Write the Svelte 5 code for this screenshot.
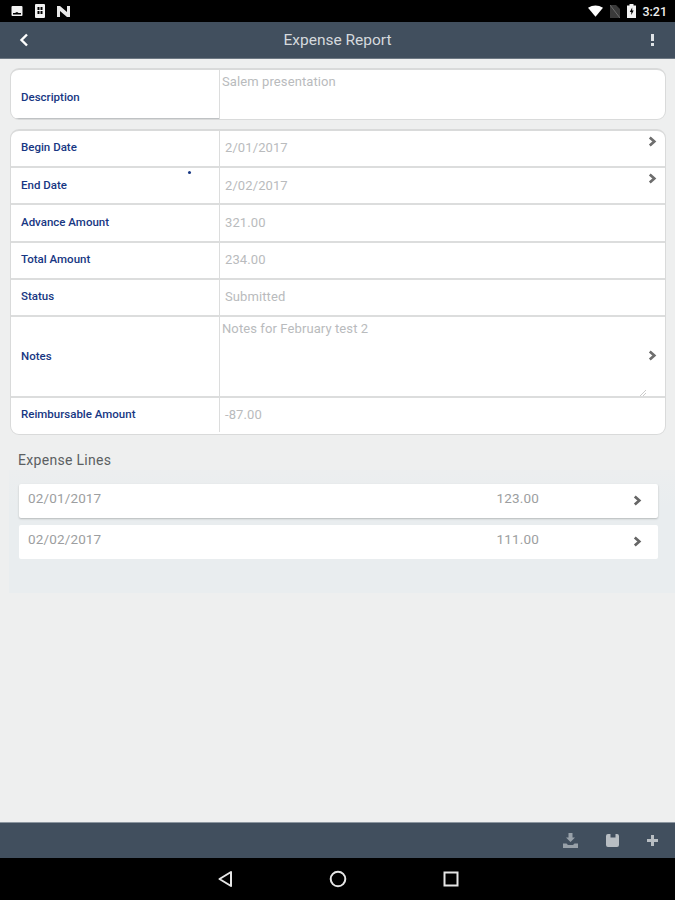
<script lang="ts">
  // Expense report detail screen on an Android tablet.
  const fields = [
    { label: 'Begin Date', value: '2/01/2017', h: 37, arrow: 'top' },
    { label: 'End Date', value: '2/02/2017', h: 37, arrow: 'top', required: true },
    { label: 'Advance Amount', value: '321.00', h: 38 },
    { label: 'Total Amount', value: '234.00', h: 37 },
    { label: 'Status', value: 'Submitted', h: 37 },
    { label: 'Notes', value: 'Notes for February test 2', h: 81, arrow: 'mid', notes: true },
    { label: 'Reimbursable Amount', value: '-87.00', h: 37 },
  ];

  const lines = [
    { date: '02/01/2017', amount: '123.00' },
    { date: '02/02/2017', amount: '111.00' },
  ];
</script>

{#snippet chevron(cls: string)}
  <svg class={cls} viewBox="0 0 10 12" width="9" height="11">
    <path d="M2 1.5 L7 6 L2 10.5" fill="none" stroke="currentColor" stroke-width="3" />
  </svg>
{/snippet}

<div class="screen">
  <div class="statusbar">
    <div class="status-left">
      <svg viewBox="0 0 12 12" width="12" height="12"><path fill-rule="evenodd" d="M1.5 1h9a1 1 0 0 1 1 1v8a1 1 0 0 1-1 1h-9a1 1 0 0 1-1-1V2a1 1 0 0 1 1-1zM2 8v1.5h8V8H7.5L6 7 4 8z" fill="#f2f2f2" /></svg>
      <svg viewBox="0 0 10 14" width="10" height="14"><path fill-rule="evenodd" d="M1 0h8a1 1 0 0 1 1 1v12a1 1 0 0 1-1 1H1a1 1 0 0 1-1-1V1a1 1 0 0 1 1-1zM2.5 3v3h2V3zm3 0v3h2V3zm-3 4v3h2V7zm3 0v3h2V7z" fill="#f2f2f2" /></svg>
      <svg viewBox="0 0 13 11" width="13" height="11"><path d="M0 0h3l7 6V0h3v11h-3L3 5v6H0z" fill="#e8e8e8" /></svg>
    </div>
    <div class="status-right">
      <svg viewBox="0 0 16 12" width="15" height="12"><path d="M0 2.5Q8-2.5 16 2.5L8 12z" fill="#fff" /></svg>
      <svg viewBox="0 0 10 13" width="10" height="13"><path d="M0 0h6l4 4v9H0z" fill="#3a3a3a" /><path d="M0 0 10 13" stroke="#6a6a6a" stroke-width="1" /></svg>
      <svg viewBox="0 0 9 14" width="9" height="14"><path fill-rule="evenodd" d="M2.5 0h4v1.5H9V14H0V1.5h2.5zM5.2 3.5 2.8 8h1.5v3l2.4-4.5H5.2z" fill="#f2f2f2" /></svg>
      <span class="clock">3:21</span>
    </div>
  </div>

  <header class="topbar">
    <svg class="back" viewBox="0 0 10 14" width="10" height="14">
      <path d="M8 1.5 L2.5 7 L8 12.5" fill="none" stroke="#fff" stroke-width="2.4" />
    </svg>
    <span class="title">Expense Report</span>
    <div class="kebab"><i></i><i></i></div>
  </header>

  <main class="content">
    <section class="card description">
      <div class="label desc-label">Description</div>
      <div class="value desc-value">Salem presentation</div>
    </section>

    <section class="card form">
      {#each fields as f}
        <div class="row" style="height: {f.h}px">
          <div class="label">
            {f.label}
            {#if f.required}<span class="req"></span>{/if}
          </div>
          <div class="value" class:notes={f.notes}>
            <span>{f.value}</span>
            {#if f.arrow}{@render chevron('arrow ' + f.arrow)}{/if}
            {#if f.notes}
              <svg class="grip" viewBox="0 0 6 6" width="6" height="6"><path d="M0 6 6 0M3 6 6 3" stroke="#ccc" /></svg>
            {/if}
          </div>
        </div>
      {/each}
    </section>

    <h2 class="lines-title">Expense Lines</h2>
    <section class="lines-panel">
      {#each lines as line}
        <div class="line">
          <span class="line-date">{line.date}</span>
          <span class="line-amount">{line.amount}</span>
          {@render chevron('line-arrow')}
        </div>
      {/each}
    </section>
  </main>

  <footer class="bottombar">
    <svg viewBox="0 0 15 15" width="15" height="15">
      <path d="M5.5 0h4v4.5H12L7.5 9 3 4.5h2.5zM0 10.5h3.5l1.5 1.5h5l1.5-1.5H15V15H0z" fill="#98a1a9" />
    </svg>
    <svg viewBox="0 0 13 13" width="13" height="13">
      <path fill-rule="evenodd" d="M2 0h9a2 2 0 0 1 2 2v9a2 2 0 0 1-2 2H2a2 2 0 0 1-2-2V2a2 2 0 0 1 2-2zm2.5 0v3.5h5V0z" fill="#b8bec3" />
    </svg>
    <svg viewBox="0 0 11 11" width="11" height="11">
      <path d="M4 0h3v4h4v3H7v4H4V7H0V4h4z" fill="#b8bec3" />
    </svg>
  </footer>

  <nav class="navbar">
    <svg viewBox="0 0 16 18" width="16" height="18"><path d="M14 2 2.5 9 14 16z" fill="none" stroke="#e6e6e6" stroke-width="2" stroke-linejoin="round" /></svg>
    <svg viewBox="0 0 18 18" width="18" height="18"><circle cx="9" cy="9" r="7.3" fill="none" stroke="#e6e6e6" stroke-width="2" /></svg>
    <svg viewBox="0 0 16 16" width="16" height="16"><rect x="1.5" y="1.5" width="13" height="13" fill="none" stroke="#e6e6e6" stroke-width="2" /></svg>
  </nav>
</div>

<style>
  :global(body) {
    margin: 0;
  }

  .screen {
    width: 675px;
    height: 900px;
    display: flex;
    flex-direction: column;
    background: #eeefef;
    font-family: Roboto, "Liberation Sans", sans-serif;
    overflow: hidden;
  }

  .statusbar {
    height: 22px;
    flex: none;
    background: #000;
    display: flex;
    align-items: center;
    justify-content: space-between;
    padding: 0 8px 0 11px;
  }

  .status-left {
    display: flex;
    align-items: center;
    gap: 12px;
  }

  .status-right {
    display: flex;
    align-items: center;
    gap: 7px;
  }

  .clock {
    color: #eee;
    font-size: 12.5px;
    font-weight: 500;
    margin-left: -1px;
  }

  .topbar {
    height: 37px;
    flex: none;
    background: #414f5e;
    border-bottom: 1px solid #6d7883;
    box-sizing: border-box;
    display: flex;
    align-items: center;
    justify-content: space-between;
    padding: 0 21px 0 19px;
    position: relative;
  }

  .title {
    position: absolute;
    left: 0;
    right: 0;
    text-align: center;
    color: #d5d9dd;
    font-size: 15.5px;
  }

  .kebab {
    display: flex;
    flex-direction: column;
    align-items: center;
    gap: 2px;
  }

  .kebab i {
    display: block;
    width: 3px;
    height: 3px;
    background: #dfe3e6;
  }

  .kebab i:first-child {
    height: 7px;
  }

  .content {
    flex: 1;
    padding: 9px 9px 0 10px;
    display: flex;
    flex-direction: column;
  }

  .card {
    box-sizing: border-box;
    width: 656px;
    flex: none;
    background: #fff;
    border: 1px solid #d9dada;
    border-top-width: 2px;
    border-radius: 9px;
    overflow: hidden;
  }

  .description {
    height: 52px;
    display: flex;
    margin-bottom: 9px;
  }

  .label {
    width: 208px;
    flex: none;
    box-sizing: border-box;
    padding-left: 10px;
    color: #173783;
    font-size: 11.5px;
    font-weight: 500;
    display: flex;
    align-items: center;
    position: relative;
  }

  .desc-label {
    border-bottom: 1px solid #bfc2c4;
    padding-top: 6px;
  }

  .value {
    flex: 1;
    border-left: 1px solid #dcdddd;
    color: #b9bbbd;
    font-size: 13px;
    padding-left: 2px;
    letter-spacing: 0.1px;
  }

  .desc-value {
    padding-top: 4px;
  }

  .form {
    height: 306px;
  }

  .row {
    display: flex;
    box-sizing: border-box;
    border-bottom: 2px solid #dcdddd;
  }

  .row:last-child {
    border-bottom: 0;
    padding-bottom: 3px;
  }

  .row .label {
    padding-bottom: 3px;
  }

  .row:nth-child(2) .label,
  .row:nth-child(6) .label {
    padding-bottom: 1px;
  }

  .row .value {
    display: flex;
    align-items: center;
    padding-left: 5px;
    padding-bottom: 2px;
    position: relative;
  }

  .row:nth-child(2) .value {
    padding-bottom: 0;
  }

  .row .value.notes {
    align-items: flex-start;
    padding: 4px 0 0 2px;
  }

  .req {
    position: absolute;
    left: 177px;
    top: 3px;
    width: 3px;
    height: 3px;
    border-radius: 50%;
    background: #173783;
  }

  .arrow {
    position: absolute;
    right: 8px;
    color: #6e6e6e;
  }

  .arrow.top {
    top: 5px;
  }

  .arrow.mid {
    top: 33px;
  }

  .grip {
    position: absolute;
    right: 19px;
    bottom: 0;
  }

  .lines-title {
    margin: 15px 0 0 8px;
    height: 20px;
    font-size: 14px;
    font-weight: 400;
    line-height: 20px;
    color: #5c5f62;
    letter-spacing: 0.3px;
  }

  .lines-panel {
    margin: 0 0 0 -1px;
    width: 666px;
    box-sizing: border-box;
    height: 123px;
    padding: 14px 17px 0 10px;
    background: linear-gradient(#eceeef, #e9edef 30%);
    display: flex;
    flex-direction: column;
    gap: 7px;
  }

  .line {
    height: 34px;
    flex: none;
    background: #fff;
    border-radius: 2px;
    box-shadow: 0 1px 2px rgba(0, 0, 0, 0.22);
    display: flex;
    align-items: center;
    padding: 0 16px 0 9px;
    color: #9c9ea0;
    font-size: 13.5px;
    letter-spacing: 0.15px;
  }

  .line:last-child {
    box-shadow: none;
  }

  .line span {
    position: relative;
    top: -3px;
  }

  .line-date {
    flex: 1;
  }

  .line-amount {
    margin-right: 94px;
  }

  .line :global(.line-arrow) {
    color: #666;
    position: relative;
    top: -1px;
  }

  .bottombar {
    height: 36px;
    flex: none;
    box-sizing: border-box;
    background: #414f5e;
    border-top: 1px solid #8c96a0;
    display: flex;
    align-items: center;
    justify-content: flex-end;
    gap: 28px;
    padding: 0 17px 0 0;
  }

  .navbar {
    height: 42px;
    flex: none;
    background: #000;
    display: flex;
    align-items: center;
    justify-content: center;
    gap: 96px;
  }
</style>
